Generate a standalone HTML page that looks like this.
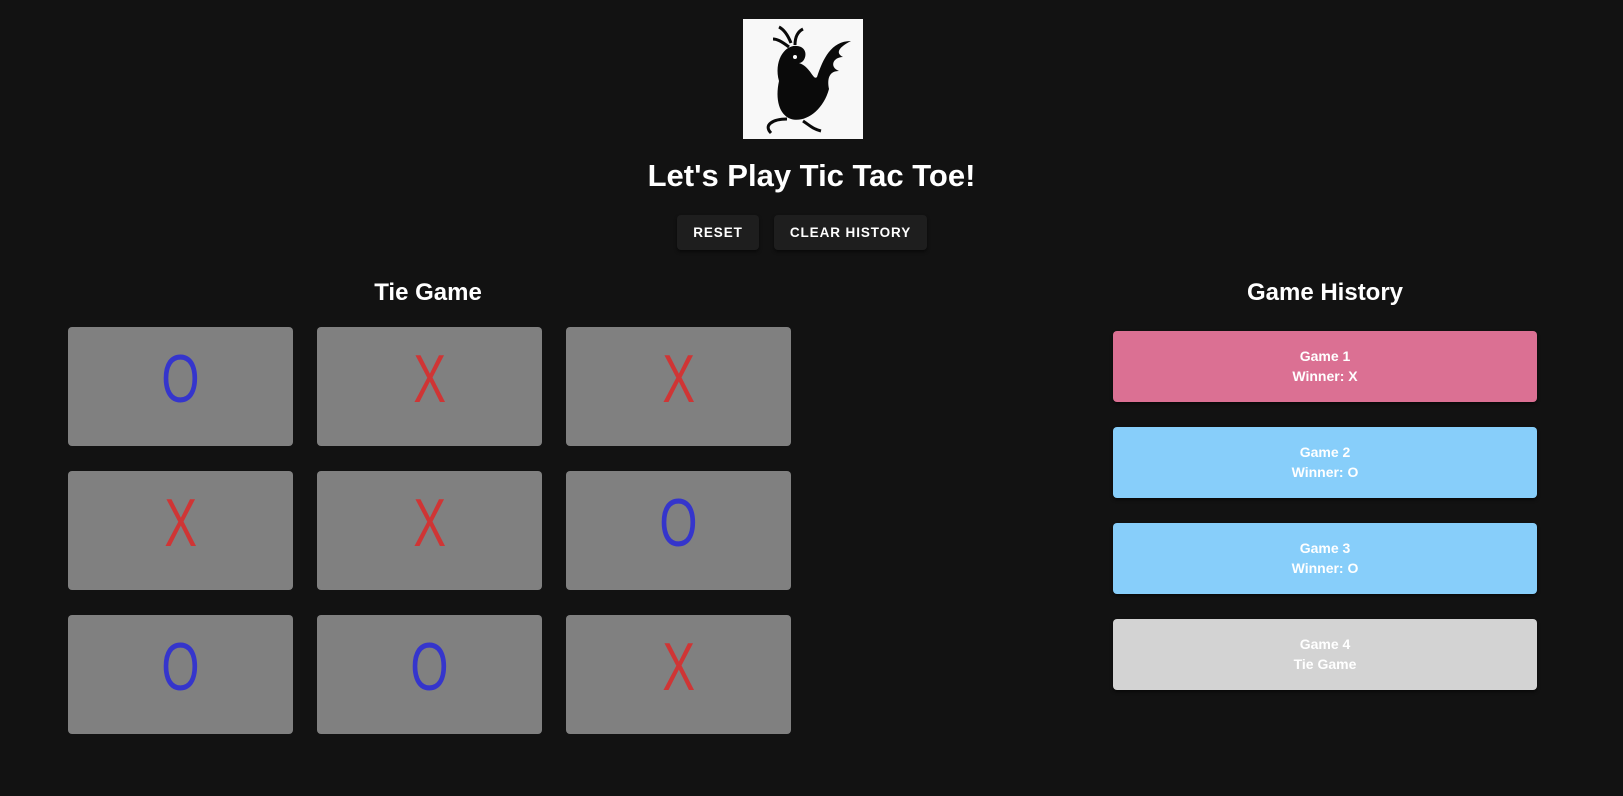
<!DOCTYPE html>
<html><head><meta charset="utf-8"><style>
*{margin:0;padding:0;box-sizing:border-box}
body{width:1623px;height:796px;background:#121212;font-family:"Liberation Sans",sans-serif;color:#fff;position:relative;overflow:hidden}
.logo{position:absolute;left:743px;top:19px;width:120px;height:120px;background:#f8f8f8}
h1{position:absolute;left:0;width:1623px;top:156px;text-align:center;font-size:31px;font-weight:bold;line-height:40px}
.btn{position:absolute;top:215px;height:35px;background:#1e1e1e;border-radius:4px;font-size:13.5px;font-weight:bold;letter-spacing:0.9px;line-height:35px;text-align:center;box-shadow:0 2px 3px rgba(0,0,0,.5)}
h2{position:absolute;top:278px;font-size:24px;font-weight:bold;text-align:center;line-height:30px}
.cell{position:absolute;width:225px;height:119px;background:#808080;border-radius:4px;font-size:68px;text-align:center;line-height:104px}
.cell span{display:inline-block;transform:scaleX(0.72)}
.o{color:#3535cc}.x{color:#cf3535}
.card{position:absolute;left:1113px;width:424px;height:71px;border-radius:4px;font-size:14px;font-weight:bold;text-align:center;line-height:20px;padding-top:15px;box-shadow:0 2px 3px rgba(0,0,0,.5)}
</style></head><body>
<div class="logo"><svg width="120" height="120" viewBox="0 0 120 120">
<path d="M36 62 C30 40 44 22 58 28 C66 32 62 44 56 44 C68 48 70 62 74 58 C80 40 88 22 108 22 C96 28 92 34 100 38 C90 38 86 48 96 52 C86 52 84 60 86 70 C80 92 62 104 48 100 C36 96 32 80 36 62 Z" fill="#0a0a0a"/>
<path d="M48 24 C44 14 40 10 36 8 M52 26 C52 16 56 12 60 10 M46 28 C38 22 34 20 30 20" stroke="#0a0a0a" stroke-width="3" fill="none"/>
<path d="M44 100 C30 100 20 106 28 114 M60 102 C66 106 70 110 78 112" stroke="#0a0a0a" stroke-width="3" fill="none"/>
<circle cx="52" cy="38" r="2" fill="#fff"/>
</svg></div>
<h1>Let's Play Tic Tac Toe!</h1>
<div class="btn" style="left:677px;width:82px">RESET</div>
<div class="btn" style="left:774px;width:153px">CLEAR HISTORY</div>
<h2 style="left:328px;width:200px">Tie Game</h2>
<h2 style="left:1225px;width:200px">Game History</h2>
<div class="cell o" style="left:68px;top:327px"><span>O</span></div>
<div class="cell x" style="left:317px;top:327px"><span>X</span></div>
<div class="cell x" style="left:566px;top:327px"><span>X</span></div>
<div class="cell x" style="left:68px;top:471px"><span>X</span></div>
<div class="cell x" style="left:317px;top:471px"><span>X</span></div>
<div class="cell o" style="left:566px;top:471px"><span>O</span></div>
<div class="cell o" style="left:68px;top:615px"><span>O</span></div>
<div class="cell o" style="left:317px;top:615px"><span>O</span></div>
<div class="cell x" style="left:566px;top:615px"><span>X</span></div>
<div class="card" style="top:331px;background:#db7093">Game 1<br>Winner: X</div>
<div class="card" style="top:427px;background:#87cefa">Game 2<br>Winner: O</div>
<div class="card" style="top:523px;background:#87cefa">Game 3<br>Winner: O</div>
<div class="card" style="top:619px;background:#d3d3d3">Game 4<br>Tie Game</div>
</body></html>
